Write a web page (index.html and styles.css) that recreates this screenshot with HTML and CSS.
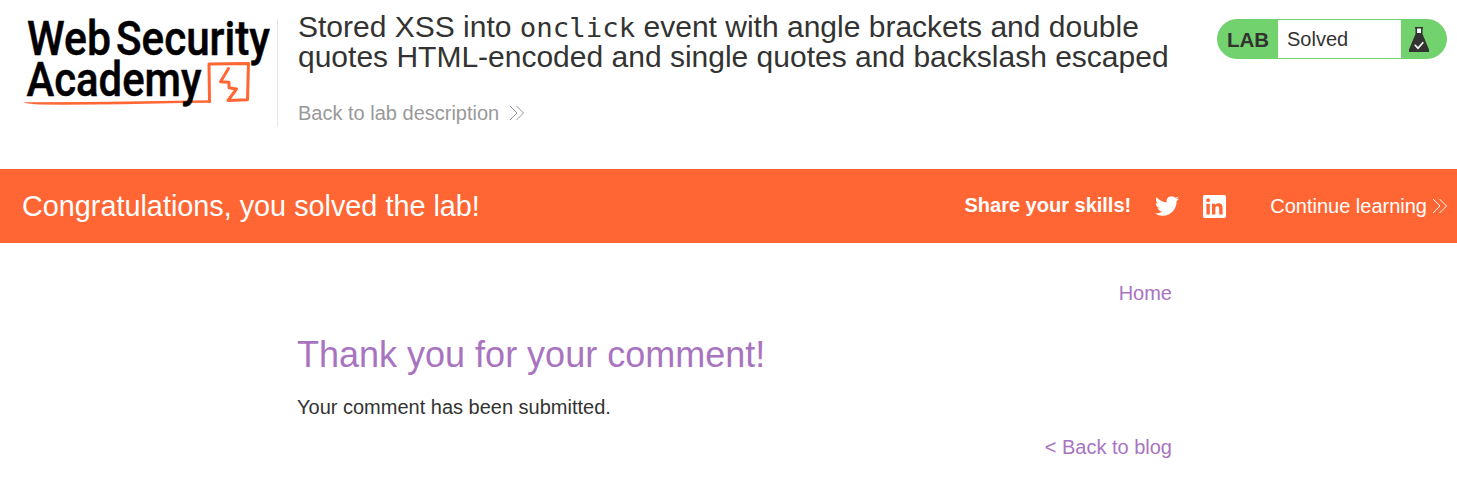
FILE: index.html
```html
<!DOCTYPE html>
<html lang="en">
<head>
<meta charset="utf-8">
<title>Stored XSS into onclick event</title>
<link rel="stylesheet" href="styles.css">
</head>
<body>
<header class="lab-header">
  <a class="logo">
    <svg width="278" height="115" viewBox="0 0 278 115" role="img" aria-label="Web Security Academy">
      <path class="logo-line" d="M209.500 101.500L209 64L248.500 63.500L247.500 99.800L228 100.500L236.500 89L229 87.800L229 82.200L220.500 81.700L228.500 68.500"/>
      <path class="logo-rule" d="M23 102.300Q60 102.200 110 101.800L211 100.300V102.700L182 103Q110 105 40 104.600Q30 104.300 23 102.300Z"/>
      <g class="logo-text">
        <text x="27" y="55" textLength="84" lengthAdjust="spacingAndGlyphs">Web</text>
        <text x="116" y="55" textLength="154" lengthAdjust="spacingAndGlyphs">Security</text>
        <text x="26.500" y="96" textLength="175" lengthAdjust="spacingAndGlyphs">Academy</text>
      </g>
    </svg>
  </a>
  <div class="title">
    <h2>Stored XSS into <code>onclick</code> event with angle brackets and double<br>quotes HTML-encoded and single quotes and backslash escaped</h2>
    <a class="link-back">Back to lab description
      <svg width="16" height="16" viewBox="0 0 16 16"><path d="M1 1L8 8L1 15M7.500 1L14.500 8L7.500 15"/></svg>
    </a>
  </div>
  <div class="status">
    <span class="status-tag">LAB</span>
    <p>Solved</p>
    <span class="status-icon">
      <svg width="20" height="26" viewBox="0 0 20 26">
        <path fill="#333332" d="M6 0H14V1.500H13.500V7L20 22.500V25H0V22.500L6.500 7V1.500H6Z"/>
        <path fill="#fff" d="M8 1.500H12V6H8Z"/>
        <path fill="none" stroke="#fff" stroke-width="1.700" d="M5.800 17.800L9 21.300L14.300 15.300"/>
      </svg>
    </span>
  </div>
</header>
<section class="banner">
  <h4>Congratulations, you solved the lab!</h4>
  <div class="share">
    <span>Share your skills!</span>
    <svg width="24" height="24" viewBox="0 0 24 24"><path d="M23.954 4.569a10 10 0 0 1-2.825.775 4.958 4.958 0 0 0 2.163-2.723 9.990 9.990 0 0 1-3.127 1.184 4.920 4.920 0 0 0-8.384 4.482C7.691 8.094 4.066 6.130 1.640 3.161a4.822 4.822 0 0 0-.666 2.475c0 1.710.870 3.213 2.188 4.096a4.904 4.904 0 0 1-2.228-.616v.061a4.923 4.923 0 0 0 3.946 4.827 4.996 4.996 0 0 1-2.212.085 4.937 4.937 0 0 0 4.604 3.417 9.868 9.868 0 0 1-6.102 2.105c-.390 0-.779-.023-1.170-.067a13.995 13.995 0 0 0 7.557 2.209c9.054 0 13.999-7.496 13.999-13.986 0-.209 0-.420-.015-.630a9.936 9.936 0 0 0 2.457-2.548Z"/></svg>
    <svg width="23" height="23" viewBox="0 0 24 24"><path d="M20.447 20.452h-3.554v-5.569c0-1.328-.027-3.037-1.852-3.037-1.853 0-2.136 1.445-2.136 2.939v5.667H9.351V9h3.414v1.561h.046c.477-.900 1.637-1.850 3.370-1.850 3.601 0 4.267 2.370 4.267 5.455v6.286zM5.337 7.433a2.062 2.062 0 1 1 0-4.125 2.062 2.062 0 0 1 0 4.125zM7.119 20.452H3.555V9h3.564v11.452zM22.225 0H1.771C.792 0 0 .774 0 1.729v20.542C0 23.227.792 24 1.771 24h20.451C23.200 24 24 23.227 24 22.271V1.729C24 .774 23.200 0 22.222 0h.003z"/></svg>
  </div>
  <a class="continue">Continue learning
    <svg width="16" height="16" viewBox="0 0 16 16"><path d="M1 1L8 8L1 15M7.500 1L14.500 8L7.500 15"/></svg>
  </a>
</section>
<main class="content">
  <nav><a>Home</a></nav>
  <h1>Thank you for your comment!</h1>
  <p>Your comment has been submitted.</p>
  <div class="back"><a>&lt; Back to blog</a></div>
</main>
</body>
</html>
```

FILE: styles.css
```css
* { box-sizing: border-box; }
body {
  margin: 0;
  background: #fff;
  color: #333332;
  font: 20px/24px "Liberation Sans", Arial, sans-serif;
}
h1, h2, h4, p { margin: 0; font-weight: 400; }
svg { display: block; flex: none; }

.lab-header {
  display: flex;
  height: 169px;
}
.logo {
  width: 278px;
  height: 127px;
  background: linear-gradient(#e6e6e6, #e6e6e6) right bottom / 1px 108px no-repeat;
}
.logo-text {
  font-family: Roboto, sans-serif;
  font-size: 47.500px;
  font-weight: 500;
  stroke: #000;
  stroke-width: .5;
}
.logo-line { fill: none; stroke: #ff6633; stroke-width: 3; stroke-linejoin: round; stroke-linecap: round; }
.logo-rule { fill: #ff6633; }

.title { padding: 12px 0 0 20px; white-space: nowrap; }
.title h2 { font-size: 30px; line-height: 30px; }
.title code {
  font: 27.400px/1 "DejaVu Sans Mono", monospace;
}
.link-back {
  display: flex;
  align-items: center;
  gap: 10px;
  margin-top: 29px;
  color: #999;
}
.link-back path, .continue path { fill: none; stroke: currentColor; stroke-width: 1; }

.status {
  display: flex;
  align-items: stretch;
  width: 230px;
  height: 40px;
  margin: 19px 10px 0 auto;
  border: 1px solid #72d26e;
  border-radius: 20px;
  overflow: hidden;
  line-height: 39px;
  background: linear-gradient(90deg, #72d26e 50px, #fff 50px 190px, #72d26e 190px);
}
.status-tag {
  width: 60px;
  padding-left: 9px;
  background: #72d26e;
  font-size: 20.500px;
  font-weight: 700;
}
.status p { flex: 1; padding-left: 9px; }
.status-icon {
  width: 45px;
  padding: 7px 0 0 8px;
  background: #72d26e;
}

.banner {
  display: flex;
  align-items: center;
  height: 74px;
  padding: 0 9px 0 22px;
  background: #ff6633;
  color: #fff;
}
.banner h4 { font-size: 28.800px; }
.share {
  display: flex;
  align-items: center;
  gap: 24px;
  margin-left: auto;
  font-weight: 700;
}
.share span { padding-bottom: 2px; }
.share svg { fill: #fff; }
.continue {
  display: flex;
  align-items: center;
  gap: 5px;
  margin-left: 44px;
}

.content {
  width: 875px;
  margin-left: 297px;
  padding-top: 38px;
}
.content nav, .back { text-align: right; color: #a974bf; }
.content h1 {
  margin: 29px 0 19px;
  color: #a974bf;
  font-size: 36px;
  line-height: 42px;
}
.back { margin-top: 16px; }
```
